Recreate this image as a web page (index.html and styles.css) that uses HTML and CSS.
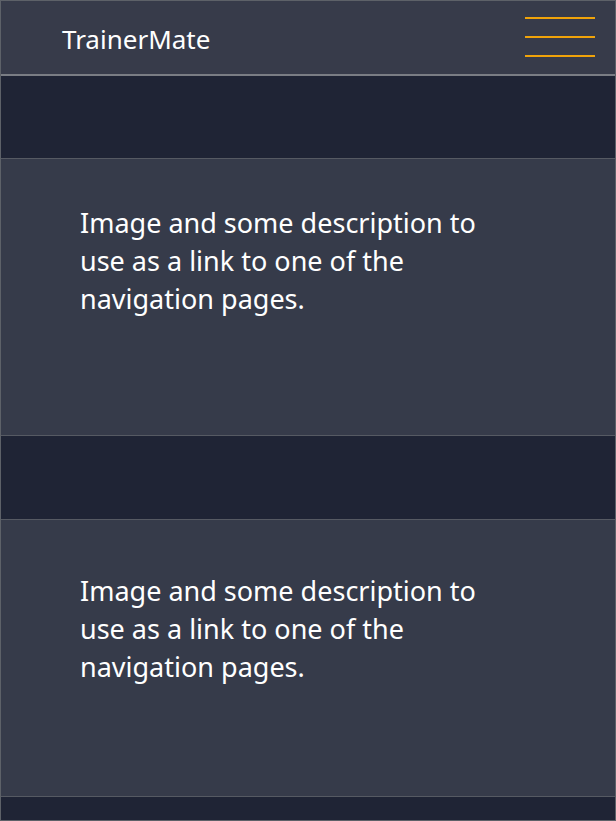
FILE: index.html
```html
<!DOCTYPE html>
<html lang="en">
<head>
<meta charset="utf-8">
<title>TrainerMate</title>
<link rel="stylesheet" href="styles.css">
</head>
<body>
<div class="page">
  <header class="topbar">
    <span class="brand">TrainerMate</span>
    <button class="menu" aria-label="Menu">
      <span class="bar"></span>
      <span class="bar"></span>
      <span class="bar"></span>
    </button>
  </header>
  <main class="content">
    <a class="card" href="#">
      <p class="card-text">Image and some description to use as a link to one of the navigation pages.</p>
    </a>
    <a class="card card-lower" href="#">
      <p class="card-text">Image and some description to use as a link to one of the navigation pages.</p>
    </a>
  </main>
</div>
</body>
</html>
```
FILE: styles.css
```css
* { box-sizing: border-box; }
html, body { margin: 0; padding: 0; }
body {
  background: #1f2435;
  font-family: "Noto Sans", "Open Sans", sans-serif;
  color: #ffffff;
}
.page {
  height: 821px;
  border: 1px solid #5d6168;
  overflow: hidden;
  background: #1f2435;
}
.topbar {
  height: 75px;
  background: #373b4a;
  border-bottom: 2px solid #7a7d84;
  display: flex;
  align-items: center;
  justify-content: space-between;
  padding: 0 20px 0 61px;
}
.brand {
  font-size: 26px;
  line-height: 1;
  color: #ffffff;
  padding-top: 3px;
}
.menu {
  background: none;
  border: 0;
  padding: 0;
  width: 70px;
  height: 40px;
  display: flex;
  flex-direction: column;
  justify-content: space-between;
  margin-top: -1px;
}
.bar {
  display: block;
  height: 2px;
  width: 70px;
  background: #f0a30a;
}
.content {
  display: flex;
  flex-direction: column;
  gap: 83px;
  padding-top: 82px;
}
.card {
  display: block;
  height: 278px;
  background: #363b4a;
  border-top: 1px solid #565a63;
  border-bottom: 1px solid #565a63;
  text-decoration: none;
  color: #ffffff;
  padding: 45px 120px 0 79px;
}
.card-lower {
  padding-top: 52px;
}
.card-text {
  margin: 0;
  font-size: 27px;
  line-height: 38px;
}
```
